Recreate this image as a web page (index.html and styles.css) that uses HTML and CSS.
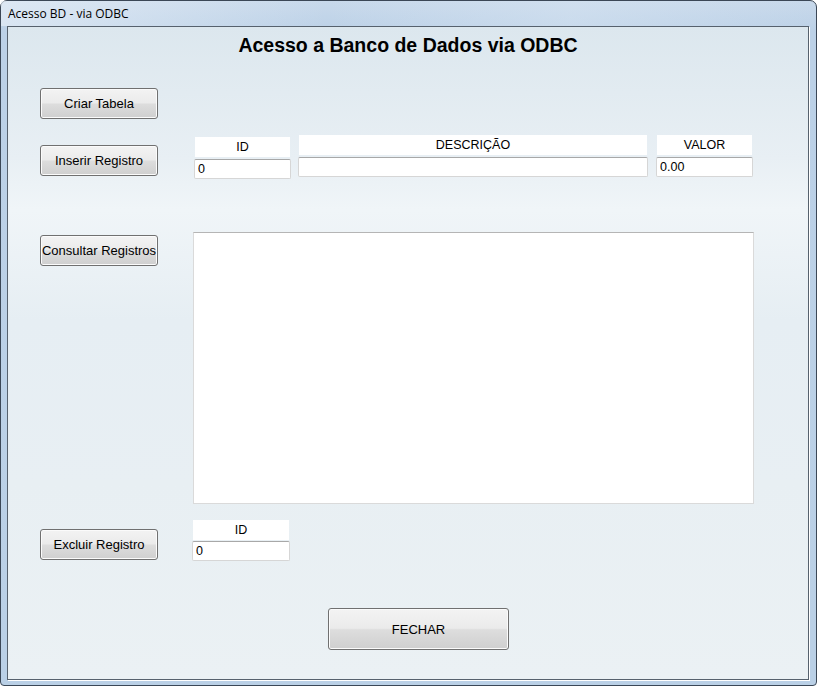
FILE: index.html
```html
<!DOCTYPE html>
<html lang="pt">
<head>
    <meta charset="UTF-8">
    <title>Acesso BD - via ODBC</title>
    <link rel="stylesheet" href="styles.css">
</head>
<body>
    <div class="janela">
        <div class="barra-titulo">Acesso BD - via ODBC</div>

        <main class="area-cliente">
            <h1 class="titulo">Acesso a Banco de Dados via ODBC</h1>

            <div class="linha linha-criar">
                <button class="botao">Criar Tabela</button>
            </div>

            <div class="linha linha-inserir">
                <button class="botao">Inserir Registro</button>
                <div class="campos">
                    <div class="campo campo-id">
                        <label class="rotulo">ID</label>
                        <input class="entrada" type="text" value="0">
                    </div>
                    <div class="campo campo-descricao">
                        <label class="rotulo">DESCRIÇÃO</label>
                        <input class="entrada" type="text" value="">
                    </div>
                    <div class="campo campo-valor">
                        <label class="rotulo">VALOR</label>
                        <input class="entrada" type="text" value="0.00">
                    </div>
                </div>
            </div>

            <div class="linha linha-consultar">
                <button class="botao">Consultar Registros</button>
                <div class="lista-registros"></div>
            </div>

            <div class="linha linha-excluir">
                <button class="botao">Excluir Registro</button>
                <div class="campo campo-excluir">
                    <label class="rotulo">ID</label>
                    <input class="entrada" type="text" value="0">
                </div>
            </div>

            <div class="linha linha-fechar">
                <button class="botao botao-fechar">FECHAR</button>
            </div>
        </main>
    </div>
</body>
</html>
```

FILE: styles.css
```css
* {
    box-sizing: border-box;
}

body {
    margin: 0;
    width: 817px;
    height: 686px;
    overflow: hidden;
    font-family: "Liberation Sans", Arial, sans-serif;
    font-size: 12.5px;
    color: #000;
}

/* moldura da janela */
.janela {
    width: 817px;
    height: 686px;
    border: 1px solid #3b4756;
    border-radius: 7px 7px 4px 4px;
    background: linear-gradient(to bottom, #c8d9eb 0px, #bcd1e7 30px, #bad0e6 100%);
    display: flex;
    flex-direction: column;
}

.barra-titulo {
    height: 25px;
    padding: 5px 0 0 7px;
    font-family: "Open Sans", "Noto Sans", sans-serif;
    font-size: 12px;
    line-height: 16px;
    color: #000;
    background: linear-gradient(to right, rgba(235, 242, 249, 0.6), rgba(205, 222, 239, 0) 40%, rgba(220, 232, 244, 0.4) 70%, rgba(200, 218, 236, 0));
}

.area-cliente {
    width: 802px;
    height: 654px;
    margin-left: 6px;
    border: 1px solid #56616d;
    box-shadow: 1px 1px 0 #ffffff;
    background: linear-gradient(to bottom, #dce7ee 0%, #e8eff4 20%, #f0f5f8 28%, #e6eef3 45%, #e8eff3 70%, #ebf1f4 100%);
    padding: 7px 0 0 32px;
}

.titulo {
    margin: 0 0 32px -32px;
    height: 22px;
    font-size: 19.5px;
    line-height: 22px;
    font-weight: bold;
    text-align: center;
}

.linha {
    display: flex;
    align-items: flex-start;
}

/* botões estilo windows 7 */
.botao {
    width: 118px;
    height: 31px;
    padding: 0;
    font-family: "Liberation Sans", Arial, sans-serif;
    font-size: 13px;
    color: #000;
    border: 1px solid #707070;
    border-radius: 3px;
    background: linear-gradient(to bottom, #f3f3f3 0%, #ebebeb 48%, #dddddd 52%, #cfcfcf 100%);
    box-shadow: inset 0 0 0 1px #fbfbfb;
    flex-shrink: 0;
}

.linha-inserir {
    margin-top: 16px;
}

.linha-inserir .botao {
    margin-top: 10px;
}

.campos {
    display: flex;
    margin-left: 36px;
    gap: 7px;
}

.campo {
    display: flex;
    flex-direction: column;
    gap: 2px;
}

.rotulo {
    display: block;
    height: 20px;
    line-height: 21px;
    background: #fff;
    text-align: center;
    margin: 0 1px;
}

.entrada {
    height: 20px;
    width: 100%;
    padding: 0 3px;
    font-family: "Liberation Sans", Arial, sans-serif;
    font-size: 12.5px;
    border: 1px solid #d6d6d6;
    border-top-color: #a8a8a8;
    border-radius: 2px;
    background: #fff;
    outline: none;
}

.campo-id {
    width: 97px;
    margin-top: 2px;
}

.campo-descricao {
    width: 350px;
}

.campo-valor {
    width: 97px;
    margin-left: 1px;
}

.linha-consultar {
    margin-top: 53px;
}

.linha-consultar .botao {
    margin-top: 3px;
}

.lista-registros {
    margin-left: 35px;
    width: 561px;
    height: 272px;
    background: #fff;
    border: 1px solid #dadada;
    border-top-color: #b5b5b5;
}

.linha-excluir {
    margin-top: 16px;
}

.linha-excluir .botao {
    margin-top: 9px;
}

.campo-excluir {
    width: 98px;
    margin-left: 34px;
    gap: 1px;
}

.linha-fechar {
    margin-top: 47px;
    padding-left: 288px;
}

.botao-fechar {
    width: 181px;
    height: 42px;
    font-size: 13px;
}
```
